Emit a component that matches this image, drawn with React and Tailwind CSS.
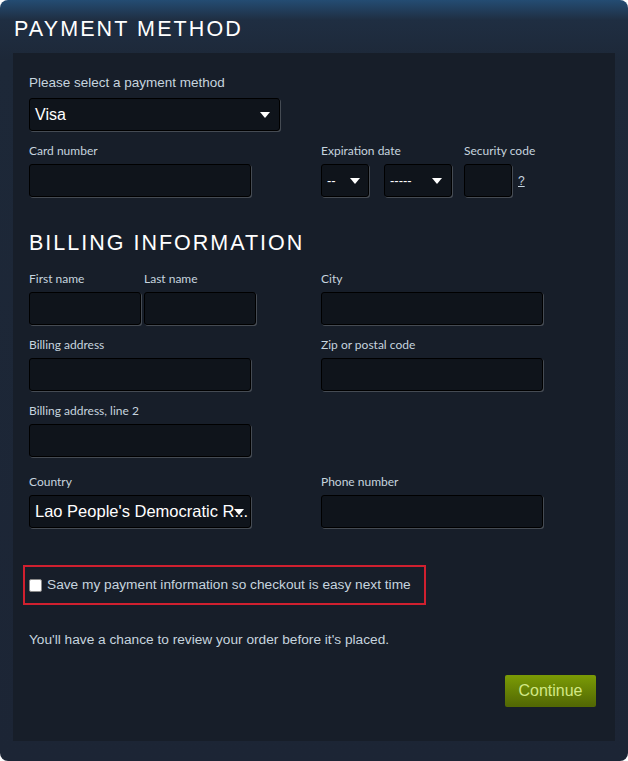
import React from 'react';

const FONT = "font-['Liberation_Sans',Arial,sans-serif]";
const LABEL = "text-[12px] leading-4 text-[#c6d4df] font-['Lato','Liberation_Sans',sans-serif]";
const FIELD = "h-[33px] rounded-[3px] border border-black bg-[#0f141b] shadow-[1px_1px_0_rgba(255,255,255,0.2)]";
const HEADING = "text-white font-['Liberation_Sans',Arial,sans-serif] uppercase";

function Arrow({ className = '' }) {
    return (
        <svg width="10" height="6" viewBox="0 0 10 6" className={className}>
            <path d="M0 0h10L5 6z" fill="#fff" />
        </svg>
    );
}

function Field({ label, width = 'w-[222px]' }) {
    return (
        <div className={width}>
            <div className={`${LABEL} mb-[5px]`}>{label}</div>
            <div className={FIELD} />
        </div>
    );
}

function Select({ value, width, textClass = 'text-[16px]', arrowRight = 'right-[9px]' }) {
    return (
        <div className={`${FIELD} ${width} relative flex items-center overflow-hidden pl-[5px]`}>
            <span className={`${textClass} text-white whitespace-nowrap ${FONT}`}>{value}</span>
            <Arrow className={`absolute top-1/2 -translate-y-1/2 ${arrowRight}`} />
        </div>
    );
}

export default function App() {
    return (
        <div className={`w-[628px] min-h-[761px] rounded-lg flex flex-col pb-[20px] bg-[linear-gradient(to_bottom,#244c73_0px,#1f2e42_20px,#1d2838_60px,#1c2535_100%)] ${FONT}`}>
            {/* section title */}
            <div className="h-[53px] pl-[14px] pt-[17px]">
                <h1 className={`${HEADING} text-[21.5px] leading-6 tracking-[2.1px]`}>Payment method</h1>
            </div>

            <div className="mx-[13px] flex-1 bg-[#171e29] pl-4 pt-[22px] pb-[34px]">
                <div className="text-[13.5px] leading-4 text-[#c6d4df] mb-[7px]">Please select a payment method</div>
                <Select value="Visa" width="w-[251px]" arrowRight="right-[9px]" />

                {/* card details */}
                <div className="flex mt-[12px]">
                    <div className="w-[292px]">
                        <Field label="Card number" />
                    </div>
                    <div>
                        <div className={`${LABEL} mb-[5px]`}>Expiration date</div>
                        <div className="flex gap-[15px]">
                            <Select value="--" width="w-[48px]" textClass="text-[13px]" arrowRight="right-[8px]" />
                            <Select value="-----" width="w-[68px]" textClass="text-[13px]" arrowRight="right-[9px]" />
                        </div>
                    </div>
                    <div className="ml-[12px]">
                        <div className={`${LABEL} mb-[5px]`}>Security code</div>
                        <div className="flex items-center gap-[6px]">
                            <div className={`${FIELD} w-[48px]`} />
                            <span className="text-[12px] text-[#c6d4df] underline">?</span>
                        </div>
                    </div>
                </div>

                <h2 className={`${HEADING} text-[21.5px] leading-[26px] tracking-[2px] mt-[33px]`}>Billing information</h2>

                <div className="flex mt-[15px]">
                    <div className="w-[292px] flex gap-[3px]">
                        <Field label="First name" width="w-[112px]" />
                        <Field label="Last name" width="w-[112px]" />
                    </div>
                    <Field label="City" />
                </div>

                <div className="flex mt-[12px]">
                    <div className="w-[292px]">
                        <Field label="Billing address" />
                    </div>
                    <Field label="Zip or postal code" />
                </div>

                <div className="mt-[12px]">
                    <Field label="Billing address, line 2" />
                </div>

                <div className="flex mt-[17px]">
                    <div className="w-[292px]">
                        <div className={`${LABEL} mb-[5px]`}>Country</div>
                        <Select value="Lao People's Democratic R..." width="w-[222px]" textClass="text-[16.5px]" arrowRight="right-[6px]" />
                    </div>
                    <Field label="Phone number" />
                </div>

                {/* save option */}
                <div className="mt-[37px] -ml-[6px] w-[403px] h-[40px] border-2 border-[#d0202f] flex items-center pl-[4px] gap-[5px]">
                    <span className="w-[13px] h-[13px] rounded-[2px] bg-white border border-[#8a8a8a]" />
                    <span className="text-[13.7px] leading-4 text-[#c6d4df]">Save my payment information so checkout is easy next time</span>
                </div>

                <p className="mt-[27px] text-[13.7px] leading-4 text-[#c6d4df]">You'll have a chance to review your order before it's placed.</p>

                <div className="flex justify-end pr-[19px] mt-[27px]">
                    <button className="w-[91px] h-[32px] rounded-[2px] bg-[linear-gradient(to_bottom,#799905_5%,#536904_95%)] text-[#d2e885] text-[16px]">
                        Continue
                    </button>
                </div>
            </div>
        </div>
    );
}
